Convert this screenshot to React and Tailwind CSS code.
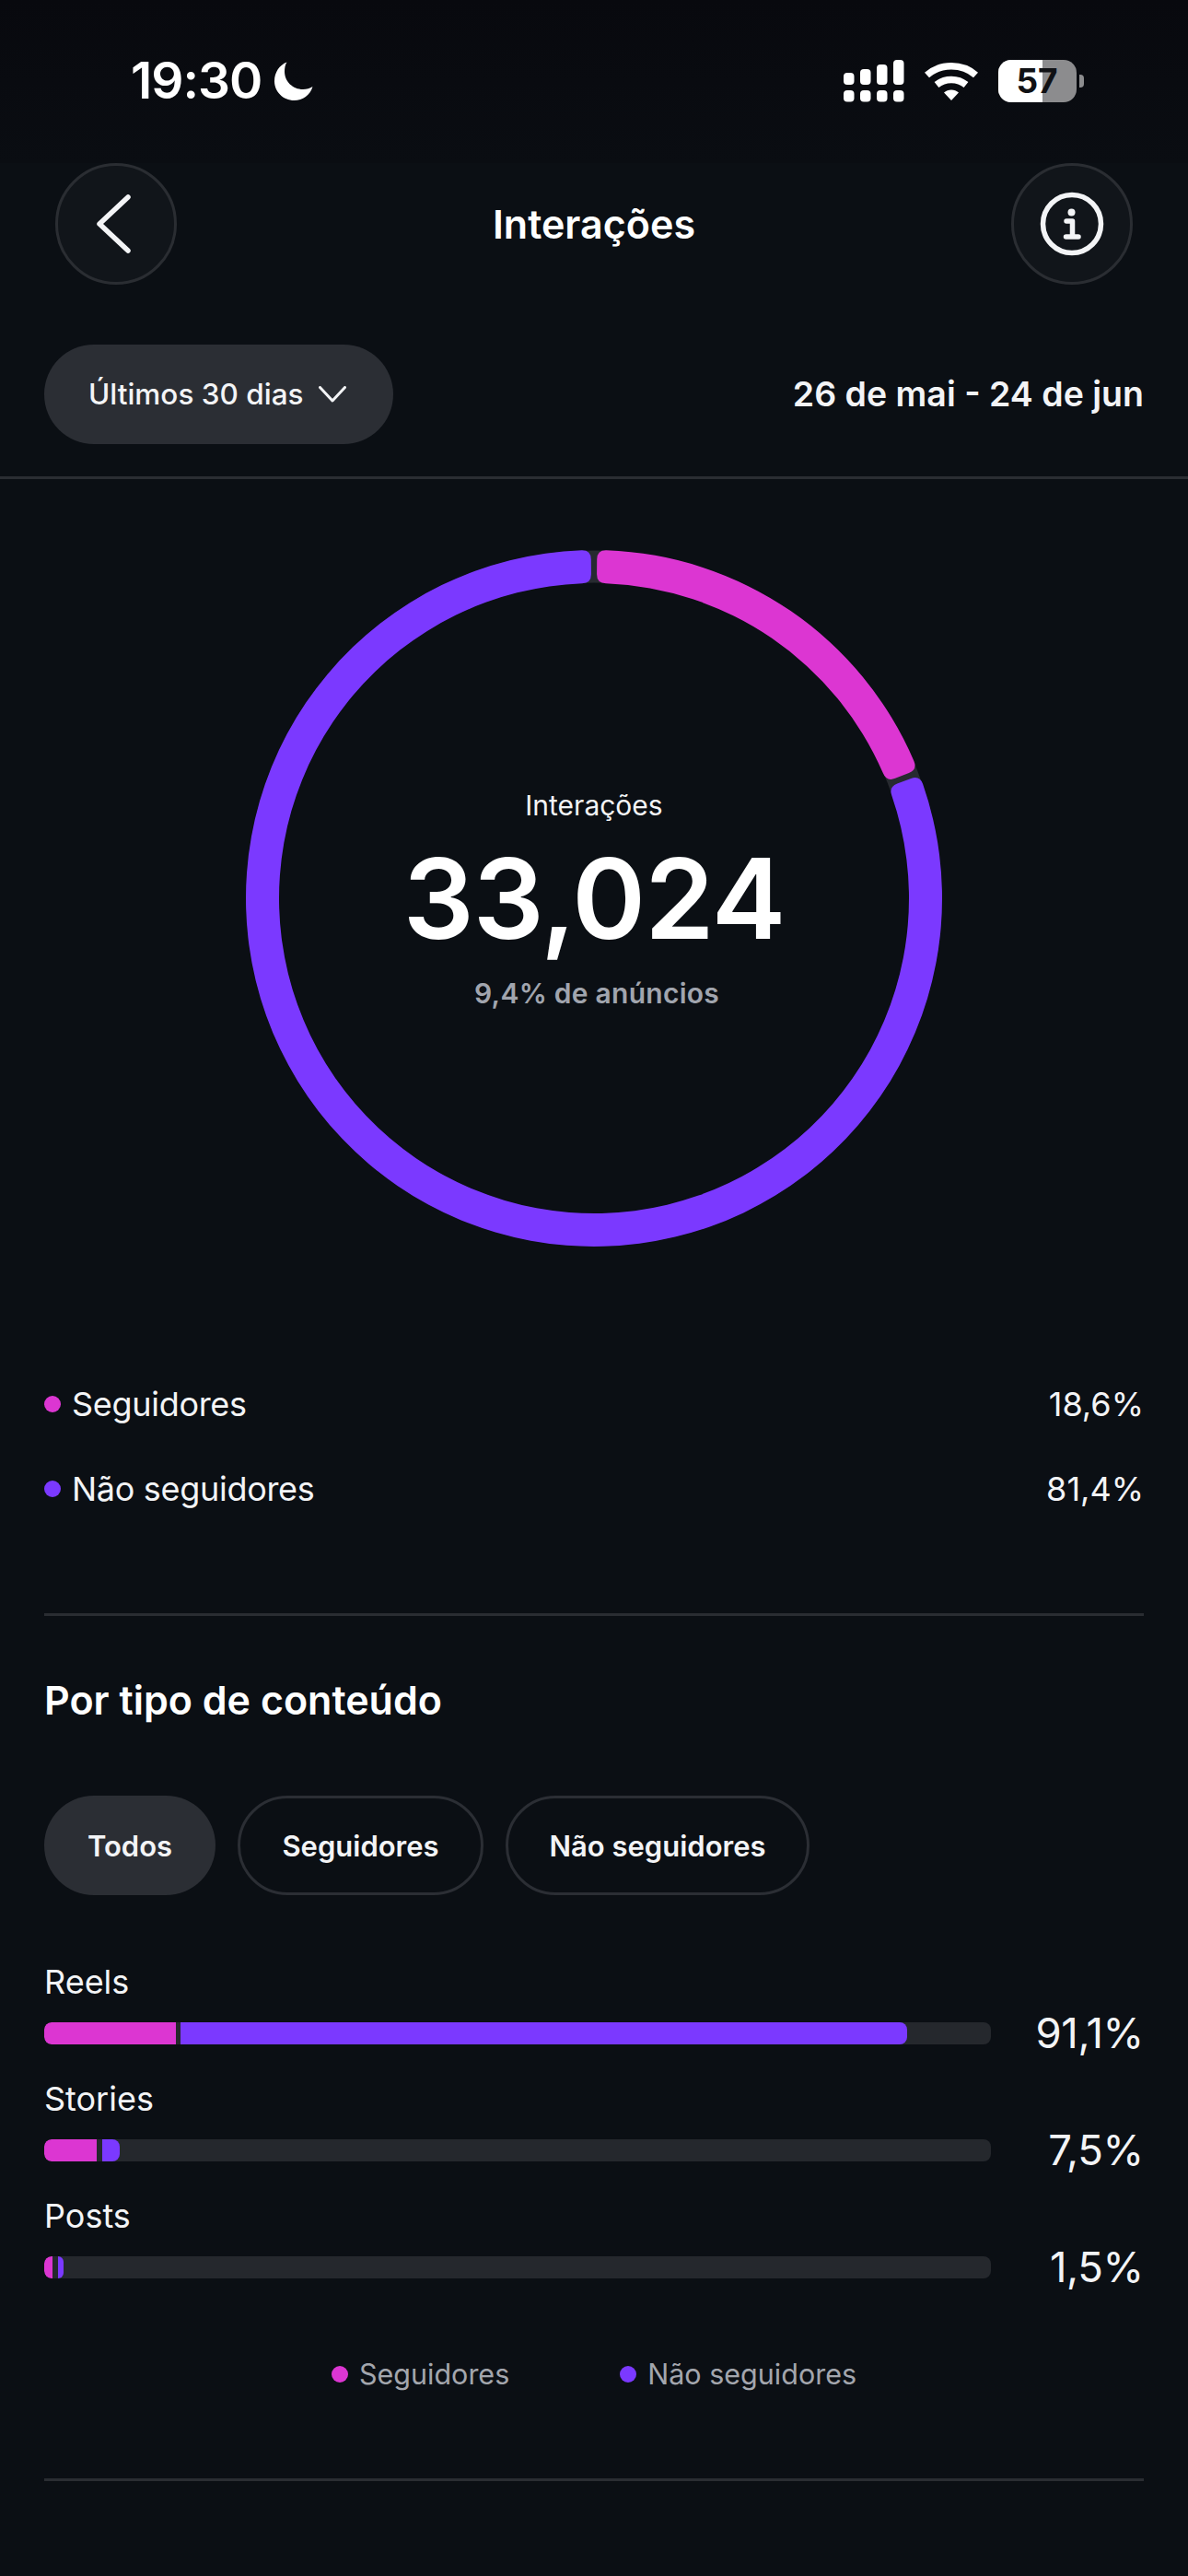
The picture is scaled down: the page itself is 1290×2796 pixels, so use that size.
import React from "react";

const PINK = "#dc36d2";
const PURPLE = "#7b39ff";

function pt(r, deg) {
  const t = (deg * Math.PI) / 180;
  return `${(378 + r * Math.sin(t)).toFixed(2)} ${(378 - r * Math.cos(t)).toFixed(2)}`;
}

function sector(a, b) {
  const R = 378;
  const r = 342;
  const c = 10;
  const dR = (c / R) * (180 / Math.PI);
  const dr = (c / r) * (180 / Math.PI);
  const large = b - a > 180 ? 1 : 0;
  return [
    `M ${pt(R, a + dR)}`,
    `A ${R} ${R} 0 ${large} 1 ${pt(R, b - dR)}`,
    `Q ${pt(R, b)} ${pt(R - c, b)}`,
    `L ${pt(r + c, b)}`,
    `Q ${pt(r, b)} ${pt(r, b - dr)}`,
    `A ${r} ${r} 0 ${large} 0 ${pt(r, a + dr)}`,
    `Q ${pt(r, a)} ${pt(r + c, a)}`,
    `L ${pt(R - c, a)}`,
    `Q ${pt(R, a)} ${pt(R, a + dR)}`,
    "Z",
  ].join(" ");
}

function Ring() {
  return (
    <svg width="756" height="756" viewBox="0 0 756 756" className="block">
      <circle cx="378" cy="378" r="360" fill="none" stroke="#272a30" strokeWidth="35" />
      <path d={sector(0.5, 68.3)} fill={PINK} />
      <path d={sector(69.3, 359.5)} fill={PURPLE} />
    </svg>
  );
}

function Signal() {
  const cols = [
    { x: 1, top: 14 },
    { x: 19, top: 10 },
    { x: 37, top: 5 },
    { x: 55, top: 0 },
  ];
  return (
    <svg width="67" height="46" viewBox="0 0 67 46" fill="#fff" className="block">
      {cols.map((c) => (
        <g key={c.x}>
          <rect x={c.x} y={c.top} width="11.5" height={27 - c.top} rx="4" />
          <rect x={c.x} y="33" width="11.5" height="12.5" rx="4" />
        </g>
      ))}
    </svg>
  );
}

function Wifi() {
  return (
    <svg width="60" height="42" viewBox="0 0 60 42" fill="none" className="block">
      <path d="M3.5 14.5C18 1.5 42 1.5 56.5 14.5" stroke="#fff" strokeWidth="7.5" strokeLinecap="butt" />
      <path d="M14 25C23 17.5 37 17.5 46 25" stroke="#fff" strokeWidth="7.5" strokeLinecap="butt" />
      <path d="M22 33.5C26.5 29.5 33.5 29.5 38 33.5L30 42Z" fill="#fff" />
    </svg>
  );
}

function Moon() {
  return (
    <svg width="42" height="42" viewBox="0 0 42 42" className="block">
      <path
        d="M13.5 0.5C11.5 3.5 11 7 11 10.5C11 21.5 20 30 31 30C35 30 38.5 29 41.5 27C39 36 30.5 42 21.5 42C9.5 42 0 32.5 0 21C0 11.5 5.5 3.5 13.5 0.5Z"
        fill="#fff"
      />
    </svg>
  );
}

function Battery() {
  return (
    <div className="flex items-center">
      <div className="relative w-[85px] h-[46px] rounded-[14px] overflow-hidden bg-[#8c8c8e]">
        <div className="absolute left-0 top-0 h-full w-[48px] bg-white" />
        <div className="absolute inset-0 flex items-center justify-center pr-[1px] text-[37px] leading-none font-bold text-[#101114]">
          57
        </div>
      </div>
      <div className="ml-[3px] w-[5px] h-[14px] rounded-r-[4px] bg-[#8c8c8e]" />
    </div>
  );
}

function Divider() {
  return <div className="h-[3px] bg-[#2a2d32]" />;
}

function Dot({ color }) {
  return <span className={`block w-[18px] h-[18px] rounded-full ${color}`} />;
}

function LegendRow({ color, label, value }) {
  return (
    <div className="flex items-center justify-between h-[40px]">
      <div className="flex items-center gap-[12px]">
        <Dot color={color} />
        <span className="text-[36px] leading-none tracking-[-0.3px] text-[#f3f4f6]">{label}</span>
      </div>
      <span className="text-[36px] leading-none text-[#f3f4f6]">{value}</span>
    </div>
  );
}

function BarRow({ label, value, pink, gap, purple }) {
  return (
    <div className="h-[100px]">
      <div className="h-[40px] flex items-center text-[36px] leading-none text-[#f3f4f6]">{label}</div>
      <div className="mt-[12px] h-[48px] flex items-center justify-between">
        <div className="flex w-[1028px] h-[24px] rounded-[8px] overflow-hidden bg-[#25282d]">
          <div className={`h-full bg-[#dc36d2] rounded-l-[8px] ${pink}`} />
          <div className={`h-full ${gap}`} />
          <div className={`h-full bg-[#7b39ff] rounded-r-[8px] ${purple}`} />
        </div>
        <span className="text-[45.5px] leading-none tracking-[-0.3px] text-[#f3f4f6]">{value}</span>
      </div>
    </div>
  );
}

export default function App() {
  return (
    <div className="w-[1290px] h-[2796px] overflow-hidden bg-[#0b0f14] text-white [font-family:Inter,sans-serif]">
      <div className="h-[177px] pb-[2px] bg-gradient-to-b from-[#08090e] to-[#0a0d12] flex items-center justify-between pl-[142px] pr-[113px]">
        <div className="flex items-center gap-[14px]">
          <span className="text-[55px] leading-none font-semibold tracking-[-1px]">19:30</span>
          <Moon />
        </div>
        <div className="flex items-center gap-[21px]">
          <Signal />
          <Wifi />
          <Battery />
        </div>
      </div>

      <div className="h-[132px] px-[60px] flex items-center justify-between">
        <div className="w-[132px] h-[132px] rounded-full bg-[#11151a] border-[3px] border-[#2a2d32] flex items-center justify-center">
          <svg width="44" height="70" viewBox="0 0 44 70" fill="none" className="block -ml-[6px]">
            <path d="M38 6L7 35L38 64" stroke="#f3f4f6" strokeWidth="5.5" strokeLinecap="round" strokeLinejoin="round" />
          </svg>
        </div>
        <h1 className="text-[43px] leading-none font-semibold">Interações</h1>
        <div className="w-[132px] h-[132px] rounded-full bg-[#11151a] border-[3px] border-[#2a2d32] flex items-center justify-center">
          <svg width="70" height="70" viewBox="0 0 70 70" fill="none" className="block">
            <circle cx="35" cy="35" r="31.5" stroke="#f3f4f6" strokeWidth="5.5" />
            <circle cx="34.5" cy="22.5" r="4" fill="#f3f4f6" />
            <path d="M29 32H35.5V49M28.5 49H42" stroke="#f3f4f6" strokeWidth="5.5" strokeLinecap="round" strokeLinejoin="round" />
          </svg>
        </div>
      </div>

      <div className="mt-[65px] px-[48px] flex items-center justify-between">
        <div className="h-[108px] w-[379px] rounded-full bg-[#2b2e34] flex items-center pl-[48px] gap-[17px]">
          <span className="text-[31.5px] leading-none font-medium text-[#f3f4f6]">Últimos 30 dias</span>
          <svg width="30" height="18" viewBox="0 0 30 18" fill="none" className="block">
            <path d="M1.5 1.5L15 16L28.5 1.5" stroke="#f3f4f6" strokeWidth="3" strokeLinecap="round" strokeLinejoin="round" />
          </svg>
        </div>
        <span className="text-[37.5px] leading-none font-semibold text-[#f3f4f6]">26 de mai - 24 de jun</span>
      </div>

      <div className="mt-[35px]">
        <Divider />
      </div>

      <div className="relative mt-[77px] mx-auto w-[756px] h-[756px]">
        <Ring />
        <div className="absolute inset-0 flex flex-col items-center">
          <span className="mt-[259px] h-[36px] text-[30px] leading-[36px] text-[#f3f4f6]">Interações</span>
          <span className="mt-[22px] h-[122px] text-[121px] leading-[122px] font-semibold tracking-[-1px] text-white">33,024</span>
          <span className="mt-[24px] pl-[6px] h-[36px] text-[30px] leading-[36px] font-semibold tracking-[0.25px] text-[#a1a5ae]">
            9,4% de anúncios
          </span>
        </div>
      </div>

      <div className="mt-[151px] mx-[48px] flex flex-col gap-[52px]">
        <LegendRow color="bg-[#dc36d2]" label="Seguidores" value="18,6%" />
        <LegendRow color="bg-[#7b39ff]" label="Não seguidores" value="81,4%" />
      </div>

      <div className="mt-[115px] mx-[48px]">
        <Divider />
      </div>

      <h2 className="mt-[67px] mx-[48px] h-[48px] flex items-center text-[43px] leading-none font-semibold">
        Por tipo de conteúdo
      </h2>

      <div className="mt-[80px] mx-[48px] flex gap-[24px]">
        <div className="h-[108px] w-[186px] rounded-full bg-[#2b2e34] flex items-center justify-center text-[31px] leading-none font-semibold text-[#f3f4f6]">
          Todos
        </div>
        <div className="h-[108px] w-[267px] rounded-full border-[3px] border-[#2b2e34] flex items-center justify-center text-[31px] leading-none font-semibold text-[#f3f4f6]">
          Seguidores
        </div>
        <div className="h-[108px] w-[330px] rounded-full border-[3px] border-[#2b2e34] flex items-center justify-center text-[31px] leading-none font-semibold text-[#f3f4f6]">
          Não seguidores
        </div>
      </div>

      <div className="mt-[74px] mx-[48px] flex flex-col gap-[27px]">
        <BarRow label="Reels" value="91,1%" pink="w-[143px]" gap="w-[5px]" purple="w-[789px]" />
        <BarRow label="Stories" value="7,5%" pink="w-[57px]" gap="w-[6px]" purple="w-[19px]" />
        <BarRow label="Posts" value="1,5%" pink="w-[9px]" gap="w-[6px]" purple="w-[6px]" />
      </div>

      <div className="mt-[72px] h-[40px] flex items-center justify-center gap-[120px]">
        <div className="flex items-center gap-[12px]">
          <Dot color="bg-[#dc36d2]" />
          <span className="text-[30.5px] leading-none text-[#a3a6ad]">Seguidores</span>
        </div>
        <div className="flex items-center gap-[12px]">
          <Dot color="bg-[#7b39ff]" />
          <span className="text-[30.5px] leading-none text-[#a3a6ad]">Não seguidores</span>
        </div>
      </div>

      <div className="mt-[93px] mx-[48px]">
        <Divider />
      </div>
    </div>
  );
}
